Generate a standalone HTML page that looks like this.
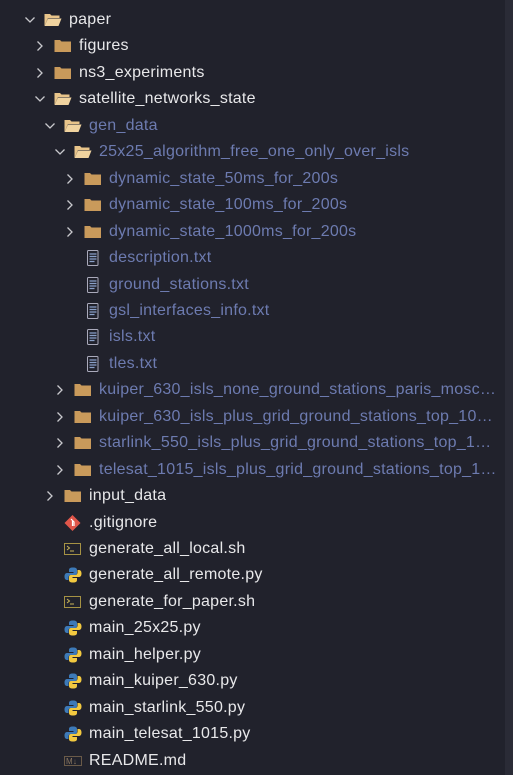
<!DOCTYPE html><html><head><style>
body{margin:0;width:513px;height:775px;background:#21222c;overflow:hidden;font-family:"Liberation Sans",sans-serif;font-size:16px;letter-spacing:0.25px;position:relative}
.r{position:absolute;left:0;width:505px;height:26px;line-height:26px;white-space:nowrap;color:#e8e8ea}
.r.b{color:#6d7bb0}
.r span.t{position:absolute;overflow:hidden;text-overflow:ellipsis;right:6px}
.r svg{position:absolute;top:5px}
.edge{position:absolute;left:505px;top:0;width:8px;height:775px;background:#2a2b36}
</style></head><body>
<div class="edge"></div>
<div id="c"></div>
<script>
const rows=[
[0,'o','f','paper',0],[1,'c','f','figures',0],[1,'c','f','ns3_experiments',0],[1,'o','f','satellite_networks_state',0],
[2,'o','f','gen_data',1],[3,'o','f','25x25_algorithm_free_one_only_over_isls',1],
[4,'c','f','dynamic_state_50ms_for_200s',1],[4,'c','f','dynamic_state_100ms_for_200s',1],[4,'c','f','dynamic_state_1000ms_for_200s',1],
[4,'','t','description.txt',1],[4,'','t','ground_stations.txt',1],[4,'','t','gsl_interfaces_info.txt',1],[4,'','t','isls.txt',1],[4,'','t','tles.txt',1],
[3,'c','f','kuiper_630_isls_none_ground_stations_paris_moscow_grid',1],[3,'c','f','kuiper_630_isls_plus_grid_ground_stations_top_100_algorithm',1],
[3,'c','f','starlink_550_isls_plus_grid_ground_stations_top_100_algorithm',1],[3,'c','f','telesat_1015_isls_plus_grid_ground_stations_top_100_algorithm',1],
[2,'c','f','input_data',0],[2,'','g','.gitignore',0],[2,'','s','generate_all_local.sh',0],[2,'','p','generate_all_remote.py',0],
[2,'','s','generate_for_paper.sh',0],[2,'','p','main_25x25.py',0],[2,'','p','main_helper.py',0],[2,'','p','main_kuiper_630.py',0],
[2,'','p','main_starlink_550.py',0],[2,'','p','main_telesat_1015.py',0],[2,'','m','README.md',0]];
const ic={
fo:'<svg width="18" height="16" viewBox="0 0 18 16"><path d="M0.5 2h5.5l1.5 1.5H15.5v2.5H4L0.5 14z" fill="#e8c48a"/><path d="M0.5 14L4 6.5h13.5L14.5 14z" fill="#f0d39f"/></svg>',
fc:'<svg width="18" height="16" viewBox="0 0 18 16"><path d="M0.5 2h5.5l1.5 1.5H17V14H0.5z" fill="#c99a5b"/></svg>',
t:'<svg width="18" height="16" viewBox="0 0 18 16"><rect x="3.5" y="0.5" width="10.5" height="15" rx="1" fill="none" stroke="#aab" /><path d="M5.5 4h7M5.5 6.5h7M5.5 9h7M5.5 11.5h5" stroke="#8aa0c8" stroke-width="1.2"/></svg>',
g:'<svg width="18" height="16" viewBox="0 0 18 16"><path d="M8.5 0l8 8-8 8L0.5 8z" fill="#e0564a"/><path d="M7 4l3 3v4M8.5 6v5" stroke="#fff" stroke-width="1.2" fill="none"/></svg>',
s:'<svg width="18" height="16" viewBox="0 0 18 16"><rect x="0.5" y="2.5" width="16" height="11" fill="none" stroke="#a59244"/><path d="M3 5l2.5 2L3 9M6 10h4" stroke="#c9b458" fill="none"/></svg>',
p:'<svg width="18" height="16" viewBox="0 0 18 16"><path d="M9 0.5c-3 0-4 1-4 2.5V5h4.5v1H3c-2 0-2.5 2-2.5 3.5S1 13 3 13h1.5v-2.5c0-1.5 1-2.5 2.5-2.5h4c1.5 0 2-1 2-2V3C13 1.5 12 0.5 9 0.5z" fill="#3d7ab8"/><path d="M9 15.5c3 0 4-1 4-2.5V11H8.5v-1H15c2 0 2.5-2 2.5-3.5S17 3 15 3h-1.5v2.5c0 1.5-1 2.5-2.5 2.5H7c-1.5 0-2 1-2 2V13c0 1.5 1 2.5 4 2.5z" fill="#f2c940"/></svg>',
m:'<svg width="18" height="16" viewBox="0 0 18 16"><rect x="0.5" y="3.5" width="17" height="9" fill="none" stroke="#6a5a48"/><text x="2" y="11" font-size="8" fill="#8a7660" font-family="Liberation Sans">M↓</text></svg>'};
const chO='<svg width="12" height="16" viewBox="0 0 12 16"><path d="M1.5 5.5l4.5 4.5 4.5-4.5" fill="none" stroke="#c8c8cc" stroke-width="1.3"/></svg>';
const chC='<svg width="12" height="16" viewBox="0 0 12 16"><path d="M3.5 3.5L8 8l-4.5 4.5" fill="none" stroke="#c8c8cc" stroke-width="1.3"/></svg>';
let h='';
rows.forEach((r,i)=>{const y=7+i*26.45;const x=24+r[0]*10;
let s='<div class="r'+(r[4]?' b':'')+'" style="top:'+y+'px">';
if(r[1])s+='<span style="position:absolute;left:'+x+'px;top:0">'+(r[1]=='o'?chO:chC).replace('<svg','<svg style="top:5px"')+'</span>';
let k=r[2]=='f'?(r[1]=='o'?'fo':'fc'):r[2];
s+='<span style="position:absolute;left:'+(x+20)+'px;top:0">'+ic[k]+'</span>';
s+='<span class="t" style="left:'+(x+45)+'px">'+r[3]+'</span></div>';h+=s;});
document.getElementById('c').innerHTML=h;
</script></body></html>
